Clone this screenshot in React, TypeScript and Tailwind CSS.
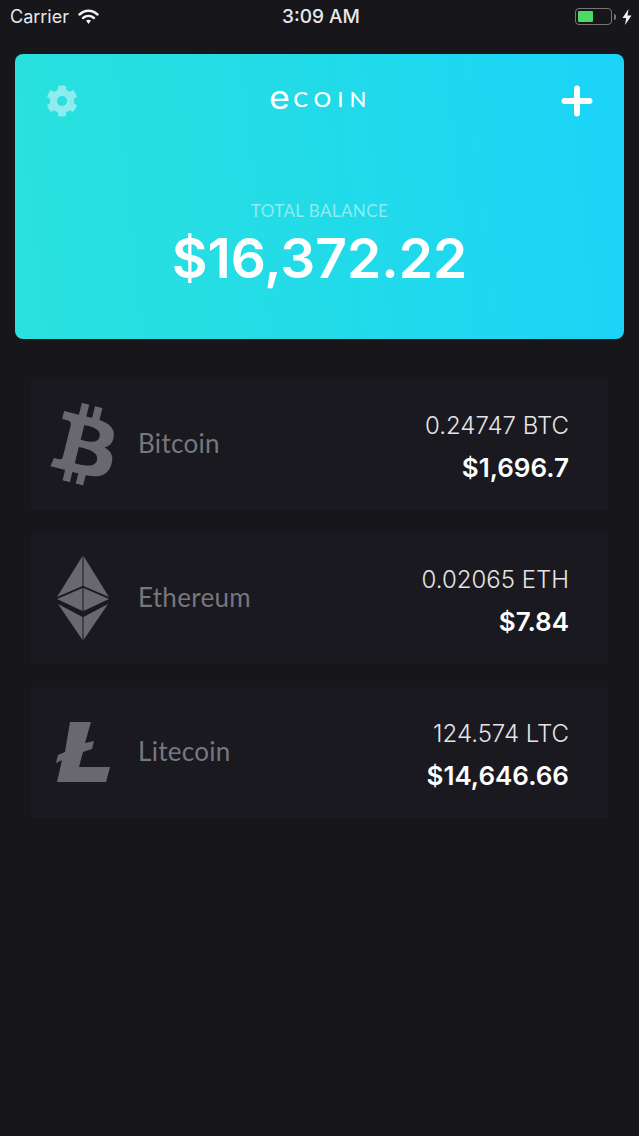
import { FaBtc, FaCog } from 'react-icons/fa';

function EthereumIcon() {
  return (
    <svg width="54" height="86" viewBox="0 0 54 86" fill="#68686e" className="mb-[2px]">
      <polygon points="26.5,1 26.5,31 1,42" />
      <polygon points="27.5,1 27.5,31 53,42" />
      <polygon points="26.5,33 26.5,56 1,44" />
      <polygon points="27.5,33 27.5,56 53,44" />
      <polygon points="2,49 26.5,62 26.5,85" />
      <polygon points="52,49 27.5,62 27.5,85" />
    </svg>
  );
}

function LitecoinIcon() {
  return (
    <svg width="54" height="60" viewBox="0 0 54 60" fill="#68686e" className="mb-[2px]">
      <polygon points="14,0 35,0 29,21 38,19 36,27 27,30 23,45 54,45 50,60 1,60 6,38 0,41 2,33 9,30" />
    </svg>
  );
}

function StatusBar() {
  return (
    <div className="flex h-[33px] items-center justify-between pl-[10px] pr-[7px] font-['Inter',sans-serif] text-[18px] text-[#e8e8ea]">
      <div className="flex w-[200px] items-center gap-[9px]">
        <span>Carrier</span>
        <svg width="21" height="16" viewBox="0 0 21 16" fill="none" stroke="#f2f2f2" strokeWidth="2.4" strokeLinecap="round">
          <path d="M1.5 5.5 C7 0.5 14 0.5 19.5 5.5" />
          <path d="M5 9 C8.3 6.2 12.7 6.2 16 9" />
          <path d="M8 11.5 L10.5 15 L13 11.5 C11.5 10.6 9.5 10.6 8 11.5 Z" fill="#f2f2f2" stroke="none" />
        </svg>
      </div>
      <span className="mt-[1px] text-[19px] font-medium">3:09 AM</span>
      <div className="flex w-[200px] items-center justify-end gap-[2px]">
        <div className="h-[17px] w-[37px] rounded-[4px] border border-[#77777b] p-[2px]">
          <div className="h-full w-[15px] rounded-[1px] bg-[#4cd964]" />
        </div>
        <div className="h-[6px] w-[2px] rounded-r-sm bg-[#77777b]" />
        <svg width="10" height="16" viewBox="0 0 10 16" fill="#f2f2f2" className="ml-[4px]">
          <polygon points="6.5,0 0.5,9 4.2,9 3,16 9.5,6.5 5.5,6.5" />
        </svg>
      </div>
    </div>
  );
}

function BalanceCard() {
  return (
    <div className="mx-[15px] mt-[21px] h-[285px] rounded-lg bg-[linear-gradient(84deg,#2ae1dd_0%,#22dbe8_50%,#1bd3f8_100%)] px-[31px] pt-[30px]">
      <div className="flex h-[33px] items-center justify-between">
        <FaCog size={32} color="#8eecec" />
        <div className="mb-[5px] ml-[2px] flex items-center text-white">
          <span className="inline-block origin-left scale-x-[1.12] font-['Inter',sans-serif] text-[32px] leading-none">e</span>
          <span className="ml-[6px] mt-[2px] font-['Lato',sans-serif] text-[22px] leading-none font-medium tracking-[6px]">COIN</span>
        </div>
        <svg width="32" height="32" viewBox="0 0 32 32" stroke="#fff" strokeWidth="6" strokeLinecap="round">
          <path d="M16 3.5 V28.5 M3.5 16 H28.5" />
        </svg>
      </div>
      <p className="mt-[84px] text-center font-['Lato',sans-serif] text-[17px] leading-5 tracking-[0.4px] text-[#8eecf2]">TOTAL BALANCE</p>
      <p className="mt-[6px] text-center font-['Inter',sans-serif] text-[55px] leading-[62px] font-semibold text-white">$16,372.22</p>
    </div>
  );
}

const coins = [
  { name: 'Bitcoin', amount: '0.24747 BTC', value: '$1,696.7', icon: <FaBtc size={80} color="#68686e" className="ml-[7px] rotate-[14deg]" /> },
  { name: 'Ethereum', amount: '0.02065 ETH', value: '$7.84', icon: <EthereumIcon /> },
  { name: 'Litecoin', amount: '124.574 LTC', value: '$14,646.66', icon: <LitecoinIcon /> },
];

export default function App() {
  return (
    <div className="h-[1136px] w-[639px] overflow-hidden bg-[#16161b]">
      <StatusBar />
      <BalanceCard />
      <div className="mx-[31px] mt-[40px] flex flex-col gap-[23px]">
        {coins.map((coin) => (
          <div key={coin.name} className="flex h-[131px] items-center bg-[#19191f] pr-[39px]">
            <div className="flex w-[103px] justify-center">{coin.icon}</div>
            <span className="mb-[2px] ml-[4px] font-['Lato',sans-serif] text-[26px] tracking-[0.3px] text-[#77777c]">{coin.name}</span>
            <div className="ml-auto text-right font-['Inter',sans-serif]">
              <p className="mt-[4px] text-[24px] leading-[30px] font-light text-[#e4e4e6]">{coin.amount}</p>
              <p className="mt-[12px] text-[26px] leading-[30px] font-semibold text-white">{coin.value}</p>
            </div>
          </div>
        ))}
      </div>
    </div>
  );
}
